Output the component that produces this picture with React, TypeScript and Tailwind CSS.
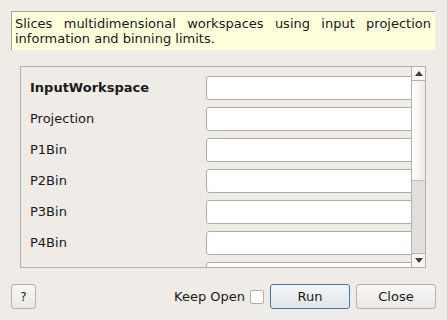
import { useState } from "react";

const rows = [
  { label: "InputWorkspace", bold: true },
  { label: "Projection" },
  { label: "P1Bin" },
  { label: "P2Bin" },
  { label: "P3Bin" },
  { label: "P4Bin" },
  { label: "" },
];

export default function App() {
  const [keepOpen, setKeepOpen] = useState(false);

  return (
    <div
      className="w-[447px] h-[320px] bg-[#efebe7] text-[13px] text-[#1a1a1a] overflow-hidden flex flex-col"
      style={{ fontFamily: '"DejaVu Sans", sans-serif' }}
    >
      {/* DESCRIPTION */}
      <div className="mt-[11px] ml-[11px] w-[424px] h-[39px] bg-[#ffffdc] border-t border-l border-[#a5a29e] pl-[3px] pr-[4px] pt-[4px] leading-[15px] text-justify">
        Slices multidimensional workspaces using input projection information and binning limits.
      </div>

      {/* PROPERTIES */}
      <div className="mt-[16px] ml-[20px] w-[406px] h-[202px] border border-[#b3afab] flex">
        <div className="flex-1 overflow-hidden flex flex-col gap-[7px] pt-[9px] pl-[9px]">
          {rows.map((r, i) => (
            <div key={i} className="flex items-center h-[24px] shrink-0">
              <span className={"w-[176px] shrink-0 " + (r.bold ? "font-bold" : "")}>{r.label}</span>
              <div className="w-[220px] h-[24px] shrink-0 bg-white border border-[#b0aca8] rounded-[3px]" />
            </div>
          ))}
        </div>

        {/* SCROLLBAR */}
        <div className="w-[14px] shrink-0 border-l border-[#b3afab] flex flex-col bg-[#e1dfdc]">
          <div className="h-[14px] border-b border-[#b3afab] bg-[#f7f6f5] flex items-center justify-center">
            <svg width="8" height="5" viewBox="0 0 8 5">
              <path d="M0 5 L4 0 L8 5 Z" fill="#3c3c3c" />
            </svg>
          </div>
          <div className="h-[100px] border-b border-[#c2bfbb] bg-gradient-to-r from-white to-[#ecebe9]" />
          <div className="flex-1" />
          <div className="h-[14px] border-t border-[#b3afab] bg-[#f7f6f5] flex items-center justify-center">
            <svg width="8" height="5" viewBox="0 0 8 5">
              <path d="M0 0 L8 0 L4 5 Z" fill="#3c3c3c" />
            </svg>
          </div>
        </div>
      </div>

      {/* BUTTONS */}
      <div className="mt-[16px] mx-[11px] flex items-center h-[25px]">
        <button className="w-[25px] h-[25px] rounded-[3px] border border-[#b5b1ad] bg-gradient-to-b from-[#f8f7f6] to-[#ebe9e6] text-[12px]">
          ?
        </button>
        <div className="flex-1" />
        <span className="mr-[5px]">Keep Open</span>
        <button
          onClick={() => setKeepOpen(!keepOpen)}
          className="w-[14px] h-[14px] bg-white border border-[#b0aca8] rounded-[2px] mr-[6px]"
        >
          {keepOpen ? "✓" : ""}
        </button>
        <button className="w-[80px] h-[25px] rounded-[3px] border border-[#3a7bb0] bg-gradient-to-b from-[#f4f5f6] to-[#e1e5e8] mr-[6px]">
          Run
        </button>
        <button className="w-[80px] h-[25px] rounded-[3px] border border-[#b5b1ad] bg-gradient-to-b from-[#f8f7f6] to-[#ebe9e6]">
          Close
        </button>
      </div>
    </div>
  );
}
